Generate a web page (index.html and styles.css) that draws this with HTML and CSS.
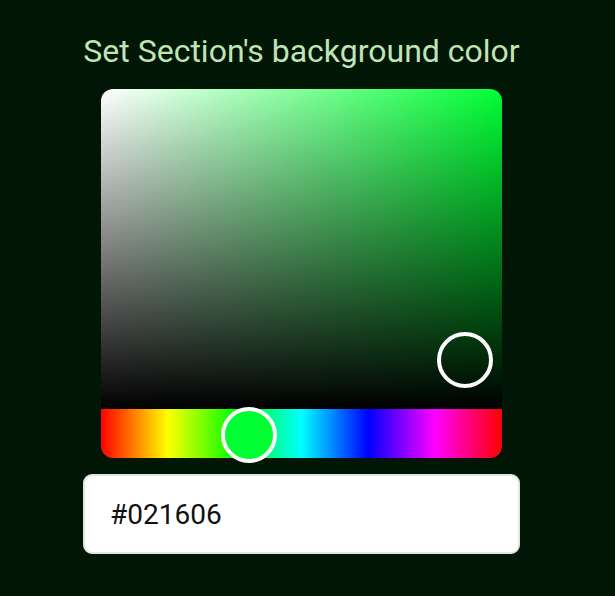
FILE: index.html
```html
<!DOCTYPE html>
<html>
<head>
<meta charset="utf-8">
<link rel="stylesheet" href="styles.css">
</head>
<body>
<div class="panel">
  <h1 class="title">Set Section's background color</h1>
  <div class="picker">
    <div class="saturation">
      <div class="sat-thumb"></div>
    </div>
    <div class="hue">
      <div class="hue-thumb"></div>
    </div>
  </div>
  <div class="hex-input">#021606</div>
</div>
</body>
</html>
```
FILE: styles.css
```css
html, body {
  margin: 0;
  padding: 0;
  background: #021606;
  height: 100%;
}
body {
  font-family: Roboto, "Liberation Sans", sans-serif;
}
.panel {
  width: 437px;
  margin-left: 83px;
  padding-top: 31px;
  display: flex;
  flex-direction: column;
}
.title {
  margin: 0;
  text-align: center;
  font-size: 32px;
  font-weight: 400;
  line-height: 40px;
  color: #bfe5b7;
  white-space: nowrap;
}
.picker {
  margin: 18px 18px 0 18px;
  display: flex;
  flex-direction: column;
}
.saturation {
  position: relative;
  height: 320px;
  border-radius: 12px 12px 0 0;
  background:
    linear-gradient(to top, #000, rgba(0,0,0,0)),
    linear-gradient(to right, #fff, rgba(255,255,255,0)),
    #00ff33;
}
.sat-thumb {
  position: absolute;
  left: 336px;
  top: 243px;
  width: 48px;
  height: 48px;
  border: 4px solid #fff;
  border-radius: 50%;
  background: transparent;
}
.hue {
  position: relative;
  height: 49px;
  border-radius: 0 0 12px 12px;
  background: linear-gradient(to right,
    #ff0000 0%, #ffff00 16.66%, #00ff00 33.33%, #00ffff 50%,
    #0000ff 66.66%, #ff00ff 83.33%, #ff0000 100%);
}
.hue-thumb {
  position: absolute;
  left: 120px;
  top: -2px;
  width: 48px;
  height: 48px;
  border: 4px solid #fff;
  border-radius: 50%;
  background: #00ff33;
}
.hex-input {
  margin-top: 16px;
  height: 80px;
  box-sizing: border-box;
  border: 2px solid #dde9dd;
  border-radius: 9px;
  background: #fff;
  padding-left: 25px;
  display: flex;
  align-items: center;
  font-size: 28px;
  color: #111;
}
```
